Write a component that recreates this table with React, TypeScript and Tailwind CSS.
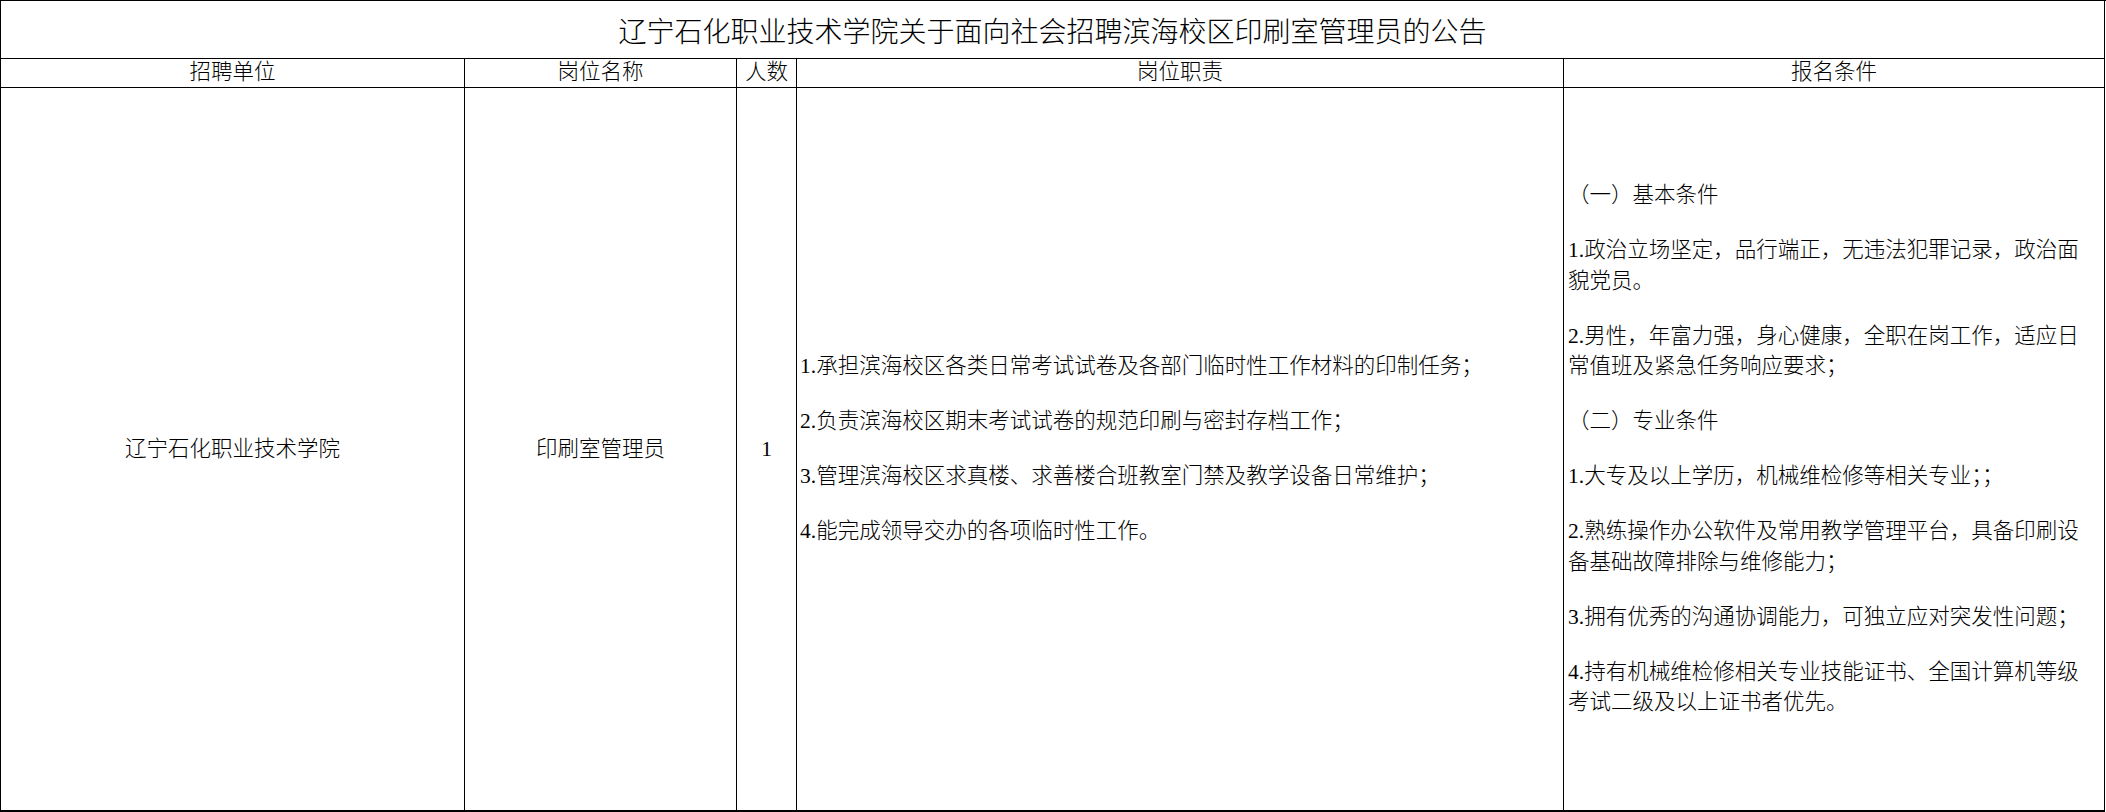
const font = "font-['Liberation_Serif','Noto_Sans_CJK_SC',serif]";

const duties = [
  '1.承担滨海校区各类日常考试试卷及各部门临时性工作材料的印制任务；',
  '2.负责滨海校区期末考试试卷的规范印刷与密封存档工作；',
  '3.管理滨海校区求真楼、求善楼合班教室门禁及教学设备日常维护；',
  '4.能完成领导交办的各项临时性工作。',
];

// each paragraph is split into the lines it wraps to in the sheet
const requirements: string[][] = [
  ['（一）基本条件'],
  ['1.政治立场坚定，品行端正，无违法犯罪记录，政治面', '貌党员。'],
  ['2.男性，年富力强，身心健康，全职在岗工作，适应日', '常值班及紧急任务响应要求；'],
  ['（二）专业条件'],
  ['1.大专及以上学历，机械维检修等相关专业；；'],
  ['2.熟练操作办公软件及常用教学管理平台，具备印刷设', '备基础故障排除与维修能力；'],
  ['3.拥有优秀的沟通协调能力，可独立应对突发性问题；'],
  ['4.持有机械维检修相关专业技能证书、全国计算机等级', '考试二级及以上证书者优先。'],
];

const headers = ['招聘单位', '岗位名称', '人数', '岗位职责', '报名条件'];

function Paragraphs({ items }: { readonly items: string[][] }): React.ReactElement {
  return (
    <div className="flex flex-col gap-[24.5px]">
      {items.map((lines, i) => (
        <div key={i} className="flex flex-col">
          {lines.map((line) => (
            <span key={line} className="block whitespace-nowrap leading-[30.5px]">
              {line}
            </span>
          ))}
        </div>
      ))}
    </div>
  );
}

export default function App(): React.ReactElement {
  return (
    <div className={`w-[2106px] h-[812px] bg-white text-black ${font} font-light`}>
      <div className="grid grid-cols-[464px_272px_60px_767px_541px] grid-rows-[58px_29px_724px] border-l border-t border-black">
        <div className="col-span-5 flex items-center justify-center pt-[6px] border-r border-b border-black text-[28px]">
          辽宁石化职业技术学院关于面向社会招聘滨海校区印刷室管理员的公告
        </div>

        {headers.map((h) => (
          <div
            key={h}
            className="flex items-center justify-center border-r border-b border-black text-[21.5px] leading-none"
          >
            {h}
          </div>
        ))}

        <div className="flex items-center justify-center border-r border-b-2 border-black text-[21.5px]">
          辽宁石化职业技术学院
        </div>
        <div className="flex items-center justify-center border-r border-b-2 border-black text-[21.5px]">
          印刷室管理员
        </div>
        <div className="flex items-center justify-center border-r border-b-2 border-black text-[21.5px]">
          1
        </div>
        <div className="flex items-center pl-[3px] border-r border-b-2 border-black text-[21.5px]">
          <Paragraphs items={duties.map((d) => [d])} />
        </div>
        <div className="flex items-center pl-[4px] border-r border-b-2 border-black text-[21.5px]">
          <Paragraphs items={requirements} />
        </div>
      </div>
    </div>
  );
}
